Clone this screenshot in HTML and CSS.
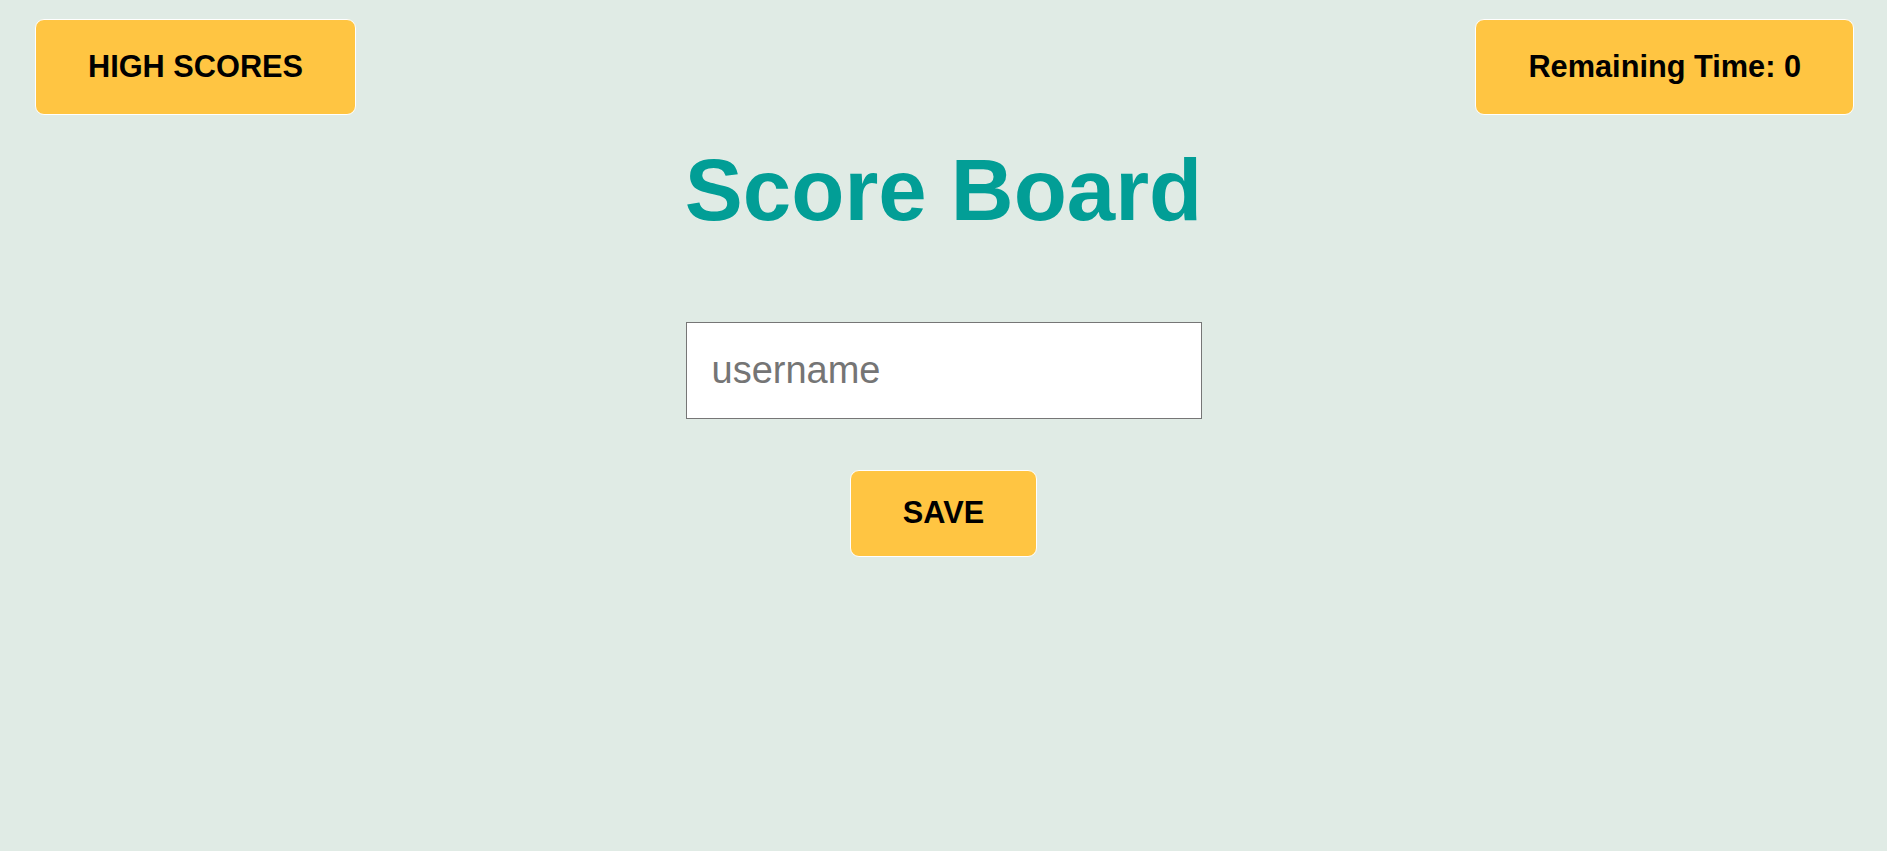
FILE: index.html
```html
<!DOCTYPE html>
<html lang="en">
<head>
<meta charset="utf-8">
<title>Score Board</title>
<link rel="stylesheet" href="styles.css">
</head>
<body>
  <header class="top-bar">
    <button class="btn btn-top">HIGH SCORES</button>
    <div class="btn btn-top timer">Remaining Time: 0</div>
  </header>
  <main class="board">
    <h1 class="title">Score Board</h1>
    <form class="save-form" onsubmit="return false;">
      <input class="username" type="text" placeholder="username">
      <button class="btn btn-save" type="submit">SAVE</button>
    </form>
  </main>
</body>
</html>
```
FILE: styles.css
```css
html, body {
  margin: 0;
  padding: 0;
}

body {
  background: #e0ebe5;
  font-family: "Liberation Sans", Arial, sans-serif;
  min-height: 851px;
}

.top-bar {
  display: flex;
  justify-content: space-between;
  align-items: flex-start;
  padding: 19px 33px 0 35px;
}

.btn {
  font-family: "Liberation Sans", Arial, sans-serif;
  font-weight: bold;
  font-size: 30.72px;
  line-height: normal;
  color: #000;
  background: #ffc542;
  border: 1px solid #ffffff;
  border-radius: 9px;
  cursor: pointer;
  box-sizing: border-box;
}

.btn-top {
  padding: 29px 52px;
}

.board {
  display: flex;
  flex-direction: column;
  align-items: center;
}

.title {
  margin: 25px 0 0 0;
  font-size: 87px;
  font-weight: bold;
  line-height: normal;
  color: #029e96;
}

.save-form {
  display: flex;
  flex-direction: column;
  align-items: center;
  gap: 51px;
  margin-top: 82px;
}

.username {
  box-sizing: border-box;
  width: 516px;
  height: 97px;
  padding: 0 25px;
  border: 1px solid #767676;
  border-radius: 0;
  background: #fff;
  font-family: "Liberation Sans", Arial, sans-serif;
  font-size: 38px;
  color: #000;
  outline: none;
}

.username::placeholder {
  color: #757575;
}

.btn-save {
  padding: 24px 52px 25px;
}
```
